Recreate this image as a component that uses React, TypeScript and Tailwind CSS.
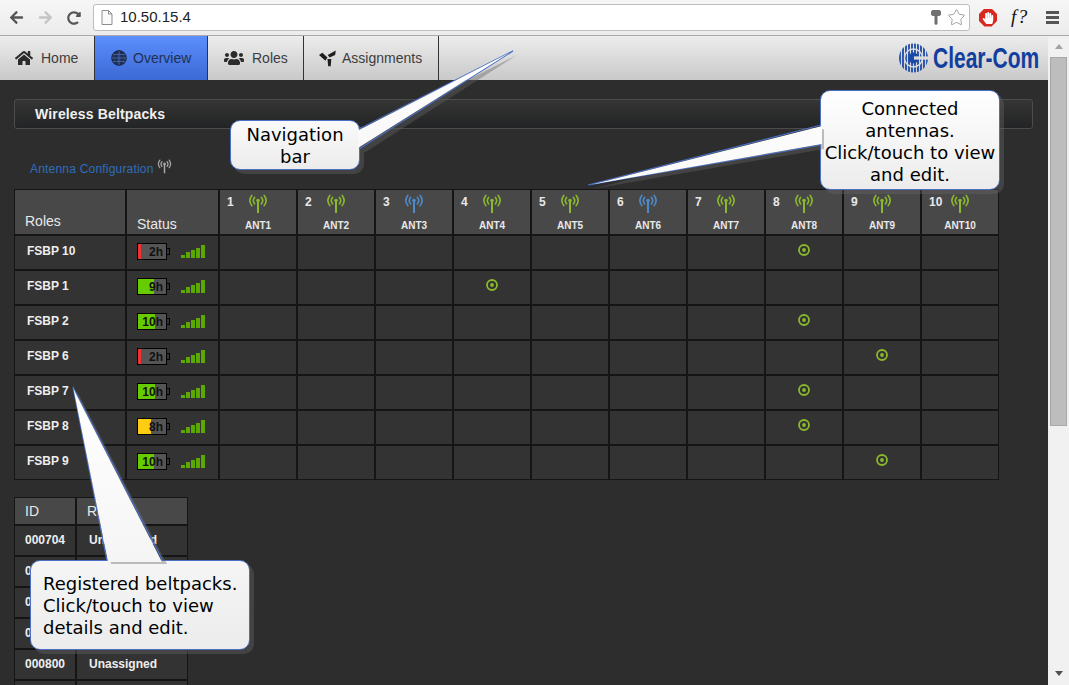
import React from "react";
import { FaArrowLeft, FaArrowRight, FaHandPaper, FaHome, FaRedoAlt, FaUsers } from "react-icons/fa";
import { Star } from "lucide-react";

const antennas = [
  { n: 1, color: "#8ab92d" },
  { n: 2, color: "#8ab92d" },
  { n: 3, color: "#4f8bca" },
  { n: 4, color: "#8ab92d" },
  { n: 5, color: "#8ab92d" },
  { n: 6, color: "#4f8bca" },
  { n: 7, color: "#8ab92d" },
  { n: 8, color: "#8ab92d" },
  { n: 9, color: "#8ab92d" },
  { n: 10, color: "#8ab92d" },
];

const roles = [
  { name: "FSBP 10", hours: "2h", fill: 3, color: "bg-[#f03232]", ant: 8 },
  { name: "FSBP 1", hours: "9h", fill: 16, color: "bg-[#66cc00]", ant: 4 },
  { name: "FSBP 2", hours: "10h", fill: 17, color: "bg-[#66cc00]", ant: 8 },
  { name: "FSBP 6", hours: "2h", fill: 3, color: "bg-[#f03232]", ant: 9 },
  { name: "FSBP 7", hours: "10h", fill: 17, color: "bg-[#66cc00]", ant: 8 },
  { name: "FSBP 8", hours: "8h", fill: 13, color: "bg-[#ffcc14]", ant: 8 },
  { name: "FSBP 9", hours: "10h", fill: 16, color: "bg-[#66cc00]", ant: 9 },
];

const registered = [
  { id: "000704", role: "Unassigned" },
  { id: "000711", role: "Unassigned" },
  { id: "000723", role: "Unassigned" },
  { id: "000756", role: "Unassigned" },
  { id: "000800", role: "Unassigned" },
  { id: "000812", role: "Unassigned" },
];

function AntennaIcon({ color, size = 20 }: { color: string; size?: number }) {
  return (
    <svg width={size} height={size} viewBox="0 0 20 20" fill="none" stroke={color} strokeWidth="1.6" strokeLinecap="round">
      <circle cx="10" cy="6.5" r="1.8" fill={color} stroke="none" />
      <path d="M10 7v12" strokeWidth="2" strokeLinecap="butt" />
      <path d="M6.6 3.4a5 5 0 0 0 0 6.4M13.4 3.4a5 5 0 0 1 0 6.4" />
      <path d="M3.8 1.4a8.4 8.4 0 0 0 0 10.2M16.2 1.4a8.4 8.4 0 0 1 0 10.2" />
    </svg>
  );
}

function GlobeIcon() {
  return (
    <svg width="16" height="16" viewBox="0 0 16 16" fill="none" stroke="#1d2a47" strokeWidth="1.2">
      <circle cx="8" cy="8" r="7.2" fill="#24365e" />
      <ellipse cx="8" cy="8" rx="3.3" ry="7.2" />
      <path d="M8 1v14M1 8h14M2 4.5h12M2 11.5h12" stroke="#4f70bd" strokeWidth="0.7" />
    </svg>
  );
}

function AssignIcon() {
  return (
    <svg width="17" height="17" viewBox="0 0 16 16" fill="#1f1f1f">
      <path d="M0 4.6 3.2 2.6l4.8 4.4-2 3z" />
      <path d="M15.8 0.4 15.2 4.6 10 7 8.2 4.8z" />
      <path d="M8 8.4h3.6l-.6 7H8.6z" />
    </svg>
  );
}

function Logo() {
  const bars = [1, 4, 7, 10, 13, 16, 19, 22, 25, 28];
  return (
    <div className="flex items-center gap-[5px] mr-[9px]">
      <svg width="29" height="30" viewBox="0 0 29 30">
        <defs>
          <clipPath id="logoDisc">
            <circle cx="14.5" cy="15" r="14.5" />
          </clipPath>
        </defs>
        <g clipPath="url(#logoDisc)" stroke="#1b4aa6" strokeWidth="1.8">
          {bars.map((x) => (
            <line key={x} x1={x} y1="0" x2={x} y2="30" />
          ))}
        </g>
        <circle cx="14.5" cy="15" r="9" fill="none" stroke="#dcdcdc" strokeWidth="1.4" />
        <circle cx="14.5" cy="15" r="5.4" fill="#1b4aa6" />
        <rect x="15" y="13.4" width="14" height="3.2" fill="#dcdcdc" />
      </svg>
      <div className="w-[106px] h-[30px] leading-[30px] whitespace-nowrap origin-left scale-x-[0.7] text-[30px] font-bold text-[#123f9e]">
        Clear-Com
      </div>
    </div>
  );
}

function BrowserBar() {
  return (
    <div className="h-[36px] flex items-center bg-gradient-to-b from-[#f6f6f6] to-[#ececec] border-b border-[#a9a9a9]">
      <div className="w-[93px] flex items-center pl-[9px] gap-[14px]">
        <FaArrowLeft className="text-[15px] text-[#555555]" />
        <FaArrowRight className="text-[15px] text-[#c4c4c4]" />
        <FaRedoAlt className="text-[14px] text-[#555555]" />
      </div>
      <div className="w-[877px] h-[27px] flex items-center bg-white border border-[#bdbdbd] rounded-[3px]">
        <svg width="12" height="15" viewBox="0 0 12 15" className="ml-[7px]" fill="#fafafa" stroke="#8d8d8d">
          <path d="M1 .5h6.5L11 4v10.5H1z" />
          <path d="M7.5.5V4H11" fill="none" />
        </svg>
        <span className="ml-[7px] text-[15px] text-[#222222]">10.50.15.4</span>
        <svg width="10" height="15" viewBox="0 0 10 15" className="ml-auto" fill="#707070">
          <path d="M0 1.5 1.5 0h7L10 1.5v3L8.5 6H6.5v8L5 15l-1.5-1V6h-2L0 4.5z" />
        </svg>
        <Star className="w-[19px] h-[19px] mx-[3px] ml-[6px] text-[#8a8a8a]" strokeWidth={1} />
      </div>
      <div className="flex-1 flex items-center">
        <div className="ml-[9px] w-[18px] h-[18px] flex items-center justify-center bg-[#d8281f] [clip-path:polygon(30%_0,70%_0,100%_30%,100%_70%,70%_100%,30%_100%,0_70%,0_30%)]">
          <FaHandPaper className="text-[12px] text-white" />
        </div>
        <span className="ml-[14px] w-[22px] text-[19px] font-medium italic tracking-[1.5px] text-[#111111] font-['Liberation_Serif',serif]">f?</span>
        <div className="ml-[13px] w-[13px] flex flex-col gap-[2px]">
          <div className="h-[3px] bg-[#555555]" />
          <div className="h-[3px] bg-[#555555]" />
          <div className="h-[3px] bg-[#555555]" />
        </div>
      </div>
    </div>
  );
}

function NavBar() {
  const tab = "h-full flex items-center border-r border-[#333333] text-[14px]";
  return (
    <div className="h-[44px] flex items-center bg-gradient-to-b from-[#ededed] to-[#c9c9c9] text-[#3d3d3d]">
      <div className={`${tab} w-[95px] pl-[15px] gap-[8px]`}>
        <FaHome className="text-[18px] text-[#2b2b2b]" />
        <span>Home</span>
      </div>
      <div className={`${tab} w-[113px] pl-[16px] gap-[6px] bg-gradient-to-b from-[#5c8ffc] to-[#3b69d6] text-[#22304f]`}>
        <GlobeIcon />
        <span>Overview</span>
      </div>
      <div className={`${tab} w-[96px] pl-[16px] gap-[8px]`}>
        <FaUsers className="text-[20px] text-[#2b2b2b]" />
        <span>Roles</span>
      </div>
      <div className={`${tab} w-[135px] pl-[15px] gap-[6px]`}>
        <AssignIcon />
        <span>Assignments</span>
      </div>
      <div className="ml-auto">
        <Logo />
      </div>
    </div>
  );
}

function Battery({ hours, fill, color }: { hours: string; fill: number; color: string }) {
  return (
    <div className="flex items-center">
      <div className="relative w-[30px] h-[17px] border border-black bg-[#555555] flex justify-end items-center pr-[3px]">
        <div className={`absolute left-0 top-0 bottom-0 ${color}`} style={{ width: fill }} />
        <span className="relative text-[12px] font-bold text-[#111111]">{hours}</span>
      </div>
      <div className="w-[3px] h-[7px] border border-l-0 border-black" />
    </div>
  );
}

function Signal() {
  return (
    <div className="flex items-end gap-px ml-[11px]">
      <div className="w-[4px] h-[3px] bg-[#5aa800]" />
      <div className="w-[4px] h-[6px] bg-[#5aa800]" />
      <div className="w-[4px] h-[8px] bg-[#5aa800]" />
      <div className="w-[4px] h-[10px] bg-[#5aa800]" />
      <div className="w-[4px] h-[13px] bg-[#5aa800]" />
    </div>
  );
}

function Marker() {
  return (
    <svg width="12" height="12" viewBox="0 0 12 12" fill="none">
      <circle cx="6" cy="6" r="5" stroke="#8ab92d" strokeWidth="1.8" />
      <circle cx="6" cy="6" r="1.9" fill="#8ab92d" />
    </svg>
  );
}

function AntennaTable() {
  return (
    <div className="w-[985px] grid grid-cols-[110px_91px_repeat(10,76px)] grid-rows-[44px_repeat(7,33px)] gap-[2px] p-px bg-[#151515]">
      <div className="bg-[#484848] flex items-end pl-[10px] pb-[5px] text-[14px] leading-[16px] text-[#e8e8e8]">Roles</div>
      <div className="bg-[#484848] flex items-end pl-[10px] pb-[2px] text-[14px] leading-[16px] text-[#e8e8e8]">Status</div>
      {antennas.map((a) => (
        <div key={a.n} className="bg-[#484848] flex flex-col items-center pt-[4px]">
          <div className="w-full grid grid-cols-[1fr_auto_1fr] items-start">
            <span className="pl-[7px] text-[12px] font-bold leading-[16px] text-[#e8e8e8]">{a.n}</span>
            <AntennaIcon color={a.color} />
          </div>
          <span className="mt-[5px] text-[10px] font-bold leading-[14px] text-[#e8e8e8]">ANT{a.n}</span>
        </div>
      ))}
      {roles.map((r) => (
        <React.Fragment key={r.name}>
          <div className="bg-[#333333] flex items-center pl-[12px] pb-[4px] text-[12px] font-bold text-[#eeeeee]">{r.name}</div>
          <div className="bg-[#333333] flex items-center pl-[10px] pb-[2px]">
            <Battery hours={r.hours} fill={r.fill} color={r.color} />
            <Signal />
          </div>
          {antennas.map((a) => (
            <div key={a.n} className="bg-[#333333] flex items-center justify-center pb-[5px]">
              {a.n === r.ant && <Marker />}
            </div>
          ))}
        </React.Fragment>
      ))}
    </div>
  );
}

function RegisteredTable() {
  return (
    <div className="mt-[17px] w-[174px] grid grid-cols-[60px_110px] grid-rows-[26px] auto-rows-[29px] gap-[2px] p-px bg-[#151515]">
      <div className="bg-[#484848] flex items-center pl-[10px] text-[14px] text-[#e8e8e8]">ID</div>
      <div className="bg-[#484848] flex items-center pl-[10px] text-[14px] text-[#e8e8e8]">Role</div>
      {registered.map((b) => (
        <React.Fragment key={b.id}>
          <div className="bg-[#333333] flex items-center pl-[10px] pb-[2px] text-[12px] font-bold text-[#eeeeee]">{b.id}</div>
          <div className="bg-[#333333] flex items-center pl-[12px] pb-[2px] text-[12px] font-bold text-[#eeeeee]">{b.role}</div>
        </React.Fragment>
      ))}
    </div>
  );
}

function Scrollbar() {
  return (
    <div className="w-[21px] bg-[#f1f1f1] flex flex-col items-center">
      <div className="h-[21px] flex items-center justify-center">
        <div className="w-0 h-0 border-x-[4px] border-x-transparent border-b-[5px] border-b-[#a3a3a3]" />
      </div>
      <div className="w-[17px] h-[369px] bg-[#bdbdbd] border border-[#a8a8a8]" />
      <div className="mt-auto h-[24px] flex items-center justify-center">
        <div className="w-0 h-0 border-x-[4px] border-x-transparent border-t-[5px] border-t-[#505050]" />
      </div>
    </div>
  );
}

// the balloons sit over the page, their places are part of the annotation
function Tails() {
  return (
    <svg width="1069" height="685" className="absolute left-0 top-0 pointer-events-none z-20">
      <defs>
        <linearGradient id="tailNav" x1="0" y1="0" x2="0" y2="1">
          <stop offset="0" stopColor="#ffffff" />
          <stop offset="1" stopColor="#f8f8f8" />
        </linearGradient>
        <linearGradient id="tailReg" x1="0" y1="0" x2="0" y2="1">
          <stop offset="0" stopColor="#ffffff" />
          <stop offset="1" stopColor="#f5f5f5" />
        </linearGradient>
      </defs>
      <g fill="rgba(100,100,100,0.4)">
        <polygon points="364,133 517,55 364,153" />
        <polygon points="824,129 592,189 824,149" />
        <polygon points="111,564 77,391 167,564" />
      </g>
      <g stroke="#4a6fc4" strokeWidth="1.2" fill="none">
        <polyline points="359,129 513,51 359,149" />
        <polyline points="821,125 588,185 821,145" />
        <polyline points="107,561 73,387 163,561" />
      </g>
      <polygon points="358,130.5 510,52.5 358,148" fill="url(#tailNav)" />
      <polygon points="822,126 592,184.5 822,144" fill="#fbfbfb" />
      <polygon points="108,562 73.5,389 162,562" fill="url(#tailReg)" />
    </svg>
  );
}

function Balloon({ className, children }: { className: string; children: React.ReactNode }) {
  return (
    <div
      className={`absolute z-10 flex flex-col justify-center rounded-[10px] border border-[#4a6fc4] bg-gradient-to-b to-[#ececec] shadow-[4px_4px_0_rgba(100,100,100,0.4)] text-[18px] leading-[22px] text-black font-['DejaVu_Sans',sans-serif] ${className}`}
    >
      {children}
    </div>
  );
}

export default function App() {
  return (
    <div className="relative w-[1069px] h-[685px] overflow-hidden font-['Liberation_Sans',Arial,sans-serif]">
      <BrowserBar />
      <div className="flex h-[649px]">
        <div className="w-[1048px] flex flex-col">
          <NavBar />
          <div className="flex-1 overflow-hidden bg-[#2d2d2d] pl-[14px] pt-[19px]">
            <div className="w-[1019px] h-[30px] flex items-center pl-[20px] rounded-[3px] border border-[#4c4c4c] bg-gradient-to-b from-[#353535] to-[#232425] text-[14px] font-bold tracking-[0.15px] text-[#f0f0f0]">
              Wireless Beltpacks
            </div>
            <div className="h-[60px] flex items-center pl-[16px] pt-[19px] text-[12px] tracking-[0.2px] text-[#2f6ebd]">
              Antenna Configuration
              <span className="ml-[3px] mb-[5px]">
                <AntennaIcon color="#a8a8a8" size={15} />
              </span>
            </div>
            <AntennaTable />
            <RegisteredTable />
          </div>
        </div>
        <Scrollbar />
      </div>

      <Tails />
      <Balloon className="left-[230px] top-[120px] w-[130px] h-[50px] pt-[2px] text-center from-[#fafafa]">
        <div>Navigation</div>
        <div>bar</div>
      </Balloon>
      <Balloon className="left-[820px] top-[90px] w-[180px] h-[100px] pt-[3px] text-center from-white">
        <div>Connected</div>
        <div>antennas.</div>
        <div>Click/touch to view</div>
        <div>and edit.</div>
      </Balloon>
      <Balloon className="left-[30px] top-[560px] w-[220px] h-[90px] pl-[12px] pt-[1px] from-[#f5f5f5]">
        <div>Registered beltpacks.</div>
        <div>Click/touch to view</div>
        <div>details and edit.</div>
      </Balloon>
    </div>
  );
}
